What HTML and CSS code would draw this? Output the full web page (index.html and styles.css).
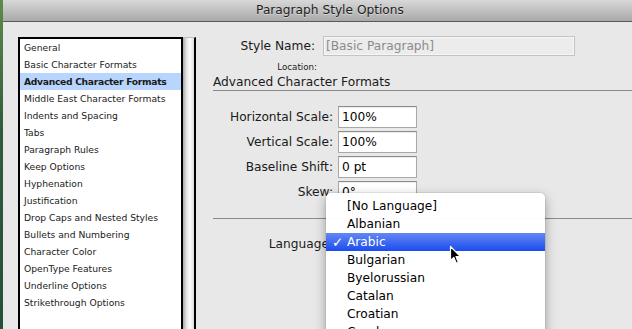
FILE: index.html
```html
<!DOCTYPE html>
<html>
<head lang="en">
    <meta charset="UTF-8">
    <title>Paragraph Style Options</title>
    <link rel="stylesheet" href="styles.css">
</head>
<body>
    <div class="screen">
        <div class="window">
            <div class="titlebar">Paragraph Style Options</div>

            <div class="content">
                <!-- category list with its scroll trough -->
                <div class="listbox">
                    <ul class="catlist">
                        <li>General</li>
                        <li>Basic Character Formats</li>
                        <li class="selected">Advanced Character Formats</li>
                        <li>Middle East Character Formats</li>
                        <li>Indents and Spacing</li>
                        <li>Tabs</li>
                        <li>Paragraph Rules</li>
                        <li>Keep Options</li>
                        <li>Hyphenation</li>
                        <li>Justification</li>
                        <li>Drop Caps and Nested Styles</li>
                        <li>Bullets and Numbering</li>
                        <li>Character Color</li>
                        <li>OpenType Features</li>
                        <li>Underline Options</li>
                        <li>Strikethrough Options</li>
                    </ul>
                    <div class="trough"></div>
                </div>

                <div class="panel">
                    <div class="namerow">
                        <span class="namelabel">Style Name:</span>
                        <div class="namefield">[Basic Paragraph]</div>
                    </div>
                    <div class="location">Location:</div>
                    <div class="section">Advanced Character Formats</div>

                    <div class="fields">
                        <span class="label">Horizontal Scale:</span><div class="box">100%</div>
                        <span class="label">Vertical Scale:</span><div class="box">100%</div>
                        <span class="label">Baseline Shift:</span><div class="box">0 pt</div>
                        <span class="label">Skew:</span><div class="box">0°</div>
                    </div>

                    <div class="rule"></div>

                    <div class="fields langrow">
                        <span class="label">Language:</span><div class="popbtn"></div>
                    </div>
                </div>
            </div>
        </div>

        <!-- open language popup -->
        <ul class="menu">
            <li>[No Language]</li>
            <li>Albanian</li>
            <li class="current"><span class="check">✓</span>Arabic</li>
            <li>Bulgarian</li>
            <li>Byelorussian</li>
            <li>Catalan</li>
            <li>Croatian</li>
            <li>Czech</li>
        </ul>

        <svg class="cursor" width="13" height="20" viewBox="0 0 13 20">
            <path d="M1.5 1.5 L1.5 15.5 L4.8 12.4 L7.3 18.3 L9.4 17.4 L7 11.6 L11.4 11.6 Z" fill="#000" stroke="#fff" stroke-width="1.2" stroke-linejoin="round"/>
        </svg>
    </div>
</body>
</html>
```

FILE: styles.css
```css
body {
    margin: 0;
    font-family: "DejaVu Sans", sans-serif;
    font-size: 12.2px;
    color: #1a1a1a;
}
.screen {
    position: relative;
    width: 632px;
    height: 329px;
    overflow: hidden;
    background: linear-gradient(#5f8a4a, #2f5d3c 40%, #24503a);
}
.window {
    margin-left: 3px;
    width: 654px;
    height: 329px;
    background-color: #e8e8e8;
}
.titlebar {
    height: 21px;
    line-height: 21px;
    text-align: center;
    border-bottom: 1px solid #5a5a5a;
    background: linear-gradient(#d8d8d8, #a9a9a9);
    text-shadow: 0 1px 0 rgba(255, 255, 255, 0.45);
    color: #1e1e1e;
}
.content {
    display: flex;
    align-items: flex-start;
    padding: 13px 0 0 15px;
}
.listbox {
    display: flex;
    margin-top: 2px;
    height: 300px;
}
.catlist {
    list-style: none;
    margin: 0;
    padding: 0;
    width: 161px;
    border: 2px solid #000;
    background-color: #fff;
    font-size: 9.2px;
}
.catlist li {
    height: 17px;
    line-height: 17px;
    padding-left: 4px;
    white-space: nowrap;
}
.catlist li.selected {
    background-color: #b7d5fd;
    font-weight: bold;
    letter-spacing: -0.3px;
}
.trough {
    width: 11px;
    border-top: 1px solid #bdbdbd;
    border-right: 2px solid #000;
    background: linear-gradient(to right, #a9a9a9, #e9e9e9 35%, #fdfdfd 65%, #dcdcdc);
}
.panel {
    flex: 1;
    margin-left: 17px;
}
.namerow {
    display: flex;
    align-items: center;
    height: 22px;
}
.namelabel {
    width: 102px;
    text-align: right;
}
.namefield {
    margin-left: 8px;
    width: 248px;
    height: 18px;
    line-height: 18px;
    padding-left: 2px;
    border: 1px solid #c3c3c3;
    box-shadow: inset 0 0 0 1px #f6f6f6;
    background-color: #ececec;
    color: #8b8b8b;
}
.location {
    width: 104px;
    margin-top: 4px;
    line-height: 12px;
    font-size: 8.7px;
    text-align: right;
}
.section {
    margin-top: 1px;
    line-height: 16px;
    border-bottom: 1px solid #8a8a8a;
}
.fields {
    display: grid;
    grid-template-columns: 120px 79px;
    grid-auto-rows: 22px;
    column-gap: 5px;
    row-gap: 3px;
    margin-top: 15px;
}
.label {
    align-self: center;
    text-align: right;
}
.box {
    line-height: 20px;
    padding-left: 3px;
    border: 1px solid #a8a8a8;
    border-top-color: #8c8c8c;
    background-color: #fff;
    box-shadow: inset 0 1px 1px rgba(0, 0, 0, 0.08);
    color: #000;
}
.rule {
    margin-top: 15px;
    border-top: 1px solid #8a8a8a;
}
.langrow {
    margin-top: 14px;
    grid-template-columns: 120px 180px;
}
.popbtn {
    border: 1px solid #b9b9b9;
    border-radius: 5px;
    background-color: #f2f2f2;
}
.menu {
    position: absolute;
    left: 326px;
    top: 193px;
    width: 219px;
    height: 150px;
    margin: 0;
    padding: 4px 0 0 0;
    list-style: none;
    border-radius: 5px 5px 0 0;
    background-color: rgba(255, 255, 255, 0.97);
    box-shadow: 0 4px 12px rgba(0, 0, 0, 0.35), 0 0 0 1px rgba(0, 0, 0, 0.06);
    color: #000;
}
.menu li {
    position: relative;
    height: 18px;
    line-height: 18px;
    padding-left: 21px;
}
.menu li.current {
    background: linear-gradient(#6487f4, #1b4cef);
    color: #fff;
}
.check {
    position: absolute;
    left: 6px;
    font-size: 13.5px;
}
.cursor {
    position: absolute;
    left: 449px;
    top: 245px;
}
```
